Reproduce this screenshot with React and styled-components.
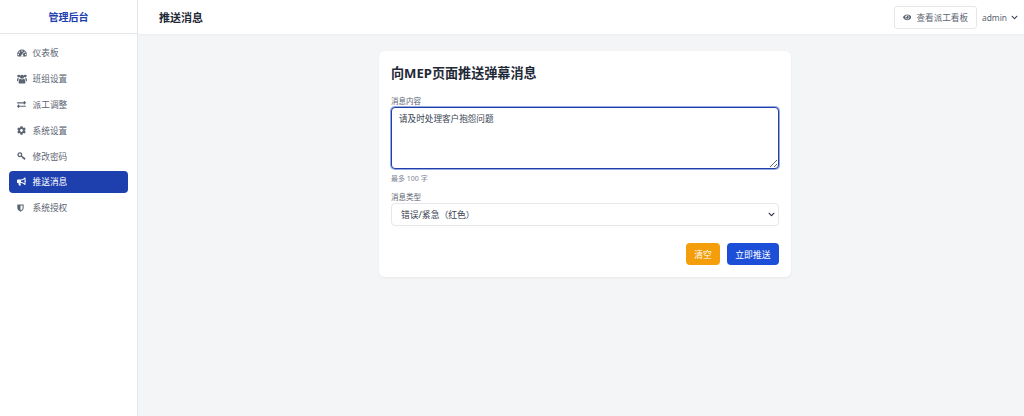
import styled, { createGlobalStyle } from 'styled-components';
import {
	FaExchangeAlt,
	FaCog,
	FaBullhorn,
	FaEye,
	FaChevronDown,
} from 'react-icons/fa';

// these four are the older, chunkier glyphs, react-icons has no match
const GaugeIcon = () => (
	<svg width="10" height="8" viewBox="0 0 24 18" fill="currentColor">
		<path
			fillRule="evenodd"
			d="M12 .5A11.7 11.7 0 0 0 .3 12.2c0 2.1.6 4 1.7 5.3h20c1.1-1.3 1.7-3.2 1.7-5.3A11.7 11.7 0 0 0 12 .5zM12 2.6a1.7 1.7 0 1 1 0 3.4 1.7 1.7 0 0 1 0-3.4zM5.6 5.2a1.7 1.7 0 1 1 0 3.4 1.7 1.7 0 0 1 0-3.4zM18.4 5.2a1.7 1.7 0 1 1 0 3.4 1.7 1.7 0 0 1 0-3.4zM3.3 10.8a1.7 1.7 0 1 1 0 3.4 1.7 1.7 0 0 1 0-3.4zM20.7 10.8a1.7 1.7 0 1 1 0 3.4 1.7 1.7 0 0 1 0-3.4zM15 6.500l1.400.5-2.300 6.300a2.400 2.400 0 1 1-1.500-.5z"
		/>
	</svg>
);

const GroupIcon = () => (
	<svg width="10" height="10" viewBox="0 0 24 24" fill="currentColor">
		<circle cx="12" cy="6.500" r="5" />
		<circle cx="4.200" cy="5" r="3.500" />
		<circle cx="19.800" cy="5" r="3.500" />
		<path d="M4.800 23c-.7-1.200-.8-2.400-.8-4 0-4.500 1.800-7.500 4-7.500 1 1 2.500 1.700 4 1.700s3-.7 4-1.700c2.200 0 4 3 4 7.500 0 1.600-.1 2.800-.8 4z" />
		<path d="M0 16.500c0-4 .9-7 2.300-7 .8.900 2 1.300 3.300 1.300C3.600 12.300 2.600 14.500 2.500 17.500 1 17.500 0 17.200 0 16.500z" />
		<path d="M24 16.500c0-4-.9-7-2.300-7-.8.900-2 1.300-3.300 1.300 2 1.500 3 3.700 3.100 6.700 1.500 0 2.500-.3 2.500-1z" />
	</svg>
);

const KeyIcon = () => (
	<svg width="9" height="8" viewBox="0 0 24 22" fill="none" stroke="currentColor">
		<circle cx="7.500" cy="7.500" r="5" strokeWidth="3.600" />
		<path d="M11.500 11.500L22 19" strokeWidth="3.800" />
		<path d="M17.500 16.500l-1.500 3M21 18.500l-1 2.500" strokeWidth="3" />
	</svg>
);

const ShieldIcon = () => (
	<svg width="7" height="8" viewBox="0 0 20 22" fill="currentColor">
		<path
			fillRule="evenodd"
			d="M1 1h18v11c0 4.500-5 7.800-9 10-4-2.200-9-5.500-9-10zM10 4v14.400c2.800-1.700 6-4 6-6.600V4z"
		/>
	</svg>
);

const navItems = [
	{ icon: GaugeIcon, label: '仪表板' },
	{ icon: GroupIcon, label: '班组设置' },
	{ icon: FaExchangeAlt, label: '派工调整' },
	{ icon: FaCog, label: '系统设置' },
	{ icon: KeyIcon, label: '修改密码' },
	{ icon: FaBullhorn, label: '推送消息', active: true },
	{ icon: ShieldIcon, label: '系统授权' },
];

function App() {
	return (
		<Page>
			<GlobalStyle />
			<Sidebar>
				<Brand>管理后台</Brand>
				<Nav>
					{navItems.map(({ icon: Icon, label, active }) => (
						<NavItem key={label} $active={active}>
							<NavIcon>
								<Icon />
							</NavIcon>
							{label}
						</NavItem>
					))}
				</Nav>
			</Sidebar>
			<Main>
				<Header>
					<PageTitle>推送消息</PageTitle>
					<HeaderRight>
						<BoardButton>
							<FaEye />
							查看派工看板
						</BoardButton>
						<UserMenu>
							admin
							<FaChevronDown />
						</UserMenu>
					</HeaderRight>
				</Header>
				<Content>
					<Card>
						<CardTitle>向MEP页面推送弹幕消息</CardTitle>
						<Label>消息内容</Label>
						<TextArea defaultValue="请及时处理客户抱怨问题" />
						<Hint>最多 100 字</Hint>
						<Label>消息类型</Label>
						<SelectWrap>
							<SelectBox defaultValue="error">
								<option value="error">错误/紧急（红色）</option>
							</SelectBox>
							<FaChevronDown />
						</SelectWrap>
						<Actions>
							<Button $bg="#f59e0b">清空</Button>
							<Button $bg="#1d4ed8">立即推送</Button>
						</Actions>
					</Card>
				</Content>
			</Main>
		</Page>
	);
}

const font = `"Noto Sans", "Noto Sans CJK SC", sans-serif`;

const GlobalStyle = createGlobalStyle`
	html, body {
		margin: 0;
		padding: 0;
		height: 100%;
		overflow: hidden;
	}
	#root {
		height: 100%;
	}
	* {
		box-sizing: border-box;
	}
	body {
		font-family: ${font};
		color: #1f2937;
	}
`;

const Page = styled.div`
	display: flex;
	width: 1024px;
	height: 416px;
	background: #f3f5f7;
`;

const Sidebar = styled.aside`
	width: 138px;
	flex-shrink: 0;
	background: #fff;
	border-right: 1px solid #e5e7eb;
`;

const Brand = styled.div`
	height: 34px;
	display: flex;
	align-items: center;
	justify-content: center;
	border-bottom: 1px solid #e5e7eb;
	color: #1e40af;
	font-size: 10px;
	font-weight: 700;
`;

const Nav = styled.nav`
	display: flex;
	flex-direction: column;
	gap: 4px;
	padding: 8px 9px;
`;

const NavItem = styled.div`
	height: 21.8px;
	display: flex;
	align-items: center;
	padding: 0 8px;
	border-radius: 4px;
	font-size: 8.7px;
	color: ${(p) => (p.$active ? '#fff' : '#5b6472')};
	background: ${(p) => (p.$active ? '#1e40af' : 'transparent')};
`;

const NavIcon = styled.span`
	width: 15.5px;
	display: flex;
	align-items: center;
	font-size: 9px;
	svg {
		display: block;
	}
`;

const Main = styled.div`
	flex: 1;
	min-width: 0;
	display: flex;
	flex-direction: column;
`;

const Header = styled.header`
	height: 34px;
	flex-shrink: 0;
	display: flex;
	align-items: center;
	justify-content: space-between;
	padding: 0 6px 0 21px;
	background: #fff;
	box-shadow: 0 1px 2px rgba(0, 0, 0, 0.04);
`;

const PageTitle = styled.h1`
	margin: 0;
	font-size: 11px;
	font-weight: 700;
	color: #1f2937;
`;

const HeaderRight = styled.div`
	display: flex;
	align-items: center;
	gap: 5px;
`;

const BoardButton = styled.button`
	height: 23px;
	width: 83px;
	display: flex;
	align-items: center;
	justify-content: center;
	gap: 5px;
	padding: 0;
	border: 1px solid #e5e7eb;
	border-radius: 3px;
	background: #fff;
	color: #5b6472;
	font: 8.6px ${font};
`;

const UserMenu = styled.div`
	display: flex;
	align-items: center;
	gap: 4px;
	font-size: 8.4px;
	color: #5b6472;
	svg {
		font-size: 7px;
		color: #374151;
	}
`;

const Content = styled.main`
	flex: 1;
	display: flex;
	justify-content: center;
	padding: 17px 0 0 8px;
`;

const Card = styled.section`
	width: 412px;
	height: 226px;
	padding: 12px;
	background: #fff;
	border-radius: 6px;
	box-shadow: 0 1px 3px rgba(0, 0, 0, 0.05);
	display: flex;
	flex-direction: column;
`;

const CardTitle = styled.h2`
	margin: 0 0 13px;
	font-size: 13.1px;
	line-height: 20px;
	font-weight: 700;
	color: #1f2937;
`;

const Label = styled.label`
	font-size: 7.5px;
	line-height: 10px;
	color: #5b6472;
	margin-bottom: 1px;
`;

const TextArea = styled.textarea`
	width: 388px;
	height: 63px;
	padding: 5px 7px;
	border: 1px solid #1e40af;
	border-radius: 4px;
	box-shadow: 0 0 0 1px rgba(30, 64, 175, 0.45);
	outline: none;
	font: 8.6px/12px ${font};
	color: #374151;
	resize: vertical;
`;

const Hint = styled.div`
	margin: 5px 0 8px;
	font-size: 7px;
	line-height: 10px;
	color: #7b8494;
`;

const SelectWrap = styled.div`
	position: relative;
	width: 388px;
	svg {
		position: absolute;
		right: 4px;
		top: 8px;
		font-size: 7px;
		color: #1f2937;
		pointer-events: none;
	}
`;

const SelectBox = styled.select`
	display: block;
	width: 100%;
	height: 23px;
	padding: 0 9px;
	border: 1px solid #e5e7eb;
	border-radius: 4px;
	background: #fff;
	appearance: none;
	font: 8.8px ${font};
	color: #374151;
`;

const Actions = styled.div`
	display: flex;
	justify-content: flex-end;
	gap: 6.500px;
	margin-top: 17px;
`;

const Button = styled.button`
	height: 22px;
	padding: 0 8.500px;
	border: none;
	border-radius: 4px;
	background: ${(p) => p.$bg};
	color: #fff;
	font: 8.8px ${font};
`;

export default App;
